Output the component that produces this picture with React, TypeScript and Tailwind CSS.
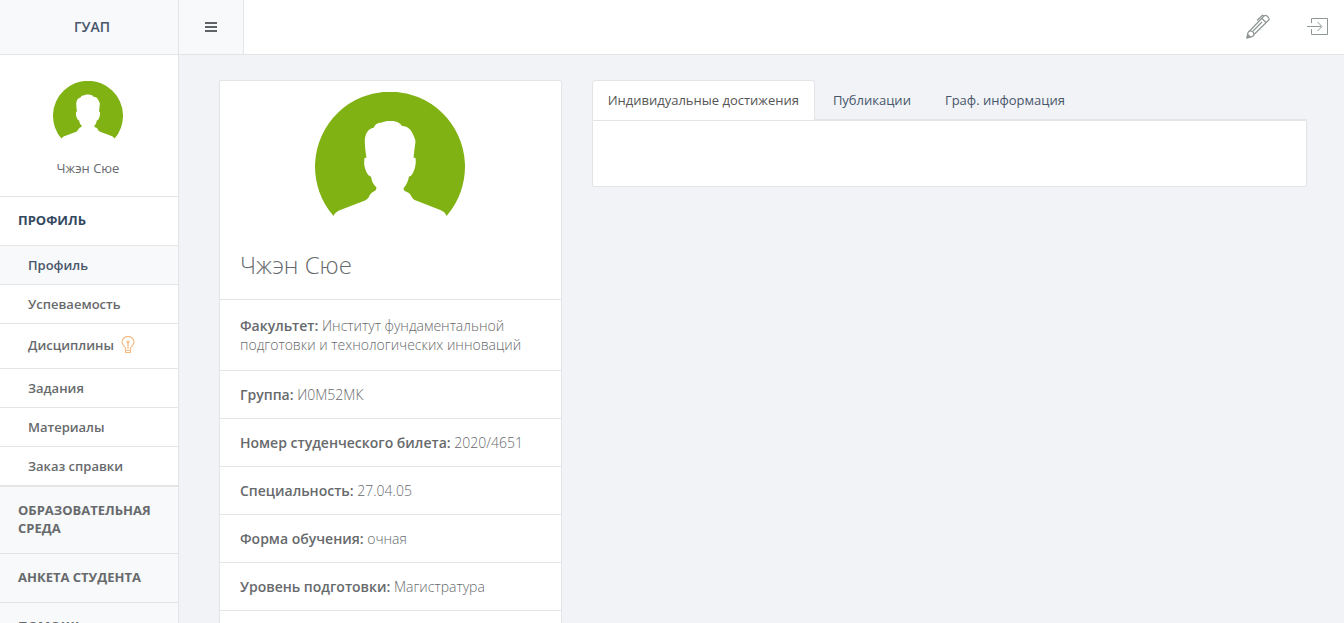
import React from "react";

type MenuItem = { label: string; active?: boolean; hint?: boolean };

const menu: MenuItem[] = [
  { label: "Профиль", active: true },
  { label: "Успеваемость" },
  { label: "Дисциплины", hint: true },
  { label: "Задания" },
  { label: "Материалы" },
  { label: "Заказ справки" },
];

const sections = ["Образовательная среда", "Анкета студента", "Помощь"];

const details = [
  { label: "Группа:", value: "И0М52МК" },
  { label: "Номер студенческого билета:", value: "2020/4651" },
  { label: "Специальность:", value: "27.04.05" },
  { label: "Форма обучения:", value: "очная" },
  { label: "Уровень подготовки:", value: "Магистратура" },
];

const tabs = ["Индивидуальные достижения", "Публикации", "Граф. информация"];

function Avatar({ className }: { className: string }) {
  return (
    <svg viewBox="0 0 150 150" className={className} role="img" aria-label="Чжэн Сюе">
      <path
        fill="#80b214"
        d="M18.500 124 A75 75 0 1 1 131.500 124 C130 120 127.500 119 124 117.500 L101 108.500 C97 107 97 104.500 94.500 101.500 C92.500 99.500 90 100 88.700 98 L88.700 96 C91.500 93 93.500 88 94 84.500 C97 84.500 98.500 80 100 75.500 C100.800 71.500 101 69 100.500 66 L98.500 65.500 L99.500 57 C100.500 50 101 49 99.500 46 C97 39 94.500 34.500 87 34 C84.500 30.500 82 29 75 29 C71 29 69.500 29.500 67 30.500 C62 31 60 32.500 59 35.500 C53 37 50.500 41 49.800 48 C49.800 54 50.500 60 51.500 65.500 L49.500 66 C49 71 49 73 50 76 C51 80 53 84 56 84.500 C56.500 89 58.500 93 61.500 95.500 L61 98 C59 100 57.500 99.500 56 101.500 C53.500 104.500 54 106.500 50 108.500 L24 118.500 C21 120 19.500 121.500 18.500 124 Z"
      />
    </svg>
  );
}

function BulbIcon() {
  return (
    <svg viewBox="0 0 14 18" className="h-[18px] w-[14px]" fill="none" stroke="#f3bd83" strokeWidth="1.2" aria-hidden="true">
      <path d="M4.500 12.500 C4.500 10.500 1 9.500 1 6.300 A5.800 5.800 0 0 1 13 6.300 C13 9.500 9.500 10.500 9.500 12.500 M4.500 12 V16.500 H9.500 V12 M4.500 14.500 H9.500 M7 13 V6.500" />
      <circle cx="7" cy="6" r="1" />
    </svg>
  );
}

function PenIcon() {
  return (
    <svg viewBox="0 0 24 25" className="h-[25px] w-6" fill="none" stroke="#8f9794" strokeWidth="1.2" strokeLinejoin="round" aria-hidden="true">
      <path d="M3.500 17 L18 2 Q19.500 0.700 21 2 L22.500 3.500 Q23.700 5 22.500 6.300 L8 20.500" />
      <path d="M1 24 L1.700 19.500 Q2.500 16.700 5 17 Q8 17.500 8 20.500 Q7.500 22.500 5 23 Z" />
      <path d="M7 17 L16 8 M16 4.500 L20 8.500 M18 2 L16.500 1.200 L11 6.500" />
      <path d="M1 24 L1.700 20.500 L4.500 23 Z" fill="#8f9794" />
    </svg>
  );
}

function ExitIcon() {
  return (
    <svg viewBox="0 0 21 19" className="h-[19px] w-[21px]" fill="none" stroke="#8f9794" aria-hidden="true">
      <path d="M4.500 6 V1.500 H20.500 V17.500 H4.500 V12 M0 9.500 H14 M10.500 5 L15 9.500 L10.500 14" />
    </svg>
  );
}

export default function App() {
  return (
    <div className="flex h-screen flex-col bg-[#f1f3f7] font-['Open_Sans','Noto_Sans',sans-serif] text-[13px] text-[#676a6c]">
      <header className="flex h-[55px] shrink-0 border-b border-[#e3e4e6] bg-white">
        <a
          href="#home"
          className="flex w-[179px] items-center justify-center border-r border-[#e3e4e6] bg-[#f7f9fb] pl-[6px] text-sm font-semibold text-[#48566a]"
        >
          ГУАП
        </a>
        <button
          type="button"
          aria-label="Меню"
          className="flex w-[65px] items-center justify-center border-r border-[#e3e4e6] bg-[#f7f9fb]"
        >
          <svg viewBox="0 0 12 10" className="h-[10px] w-3" fill="#5f6266" aria-hidden="true">
            <path d="M0 0H12V2H0Z M0 4H12V6H0Z M0 8H12V10H0Z" />
          </svg>
        </button>
        <div className="flex flex-1 items-center justify-end gap-[37px] pr-4 pb-[2px]">
          <button type="button" aria-label="Редактировать">
            <PenIcon />
          </button>
          <button type="button" aria-label="Выход">
            <ExitIcon />
          </button>
        </div>
      </header>

      <div className="flex min-h-0 flex-1">
        <aside className="w-[179px] shrink-0 overflow-y-auto border-r border-[#e3e4e6] bg-white [scrollbar-width:none]">
          <div className="flex flex-col items-center border-b border-[#e3e4e6] pt-[26px] pr-[2px] pb-[18px]">
            <Avatar className="size-[70px]" />
            <p className="mt-[7px] leading-5">Чжэн Сюе</p>
          </div>
          <nav>
            <h2 className="border-b border-[#e3e4e6] px-[18px] pt-[14px] pb-4 leading-[18px] font-bold text-[#34495e] uppercase">
              Профиль
            </h2>
            <ul className="border-b border-[#e3e4e6]">
              {menu.map((item) => (
                <li key={item.label} className="border-b border-[#e3e4e6]">
                  <a
                    href="#menu"
                    className={
                      item.active
                        ? "flex items-center bg-[#f7f9fb] px-7 py-[10px] leading-[18px] font-semibold text-[#48566a]"
                        : item.hint
                          ? "flex items-center gap-[7px] px-7 pt-3 pb-[14px] leading-[18px] font-semibold"
                          : "flex items-center px-7 py-[10px] leading-[18px] font-semibold"
                    }
                  >
                    {item.label}
                    {item.hint && <BulbIcon />}
                  </a>
                </li>
              ))}
            </ul>
            {sections.map((title) => (
              <a
                key={title}
                href="#section"
                className="block border-b border-[#e3e4e6] bg-[#f7f9fb] px-[18px] pt-[14px] pb-4 leading-[18px] font-bold uppercase"
              >
                {title}
              </a>
            ))}
          </nav>
        </aside>

        <main className="grid min-w-0 flex-1 grid-cols-3 items-start gap-[30px] overflow-y-auto pt-[25px] pr-[37px] pl-10 [scrollbar-width:none]">
          <section className="rounded-xs border border-[#e3e4e6] bg-white text-sm leading-[19px]">
            <div className="px-5 pt-[11px] pb-[18px]">
              <Avatar className="mx-auto size-[150px]" />
              <h1 className="mt-[7px] text-2xl leading-8 font-light">Чжэн Сюе</h1>
            </div>
            <p className="border-t border-[#e3e4e6] px-5 py-4 font-light">
              <strong className="font-semibold">Факультет:</strong> Институт фундаментальной подготовки и
              технологических инноваций
            </p>
            {details.map((row) => (
              <p key={row.label} className="border-t border-[#e3e4e6] px-5 py-[14px] font-light">
                <strong className="font-semibold">{row.label}</strong> {row.value}
              </p>
            ))}
            <div className="h-12 border-t border-[#e3e4e6]" />
          </section>

          <section className="col-span-2">
            <div role="tablist" className="flex">
              {tabs.map((tab, i) => (
                <button
                  key={tab}
                  type="button"
                  role="tab"
                  aria-selected={i === 0}
                  className={
                    i === 0
                      ? "h-10 rounded-t-sm border border-b-0 border-[#e3e4e6] bg-white px-[15px] text-[#555555]"
                      : "h-10 border-b border-[#e3e4e6] pt-[2px] pr-4 pl-[18px] text-[#48566a]"
                  }
                >
                  {tab}
                </button>
              ))}
              <div className="flex-1 border-b border-[#e3e4e6]" />
            </div>
            <div role="tabpanel" className="h-[67px] rounded-b-xs border border-[#e3e4e6] bg-white" />
          </section>
        </main>
      </div>
    </div>
  );
}
